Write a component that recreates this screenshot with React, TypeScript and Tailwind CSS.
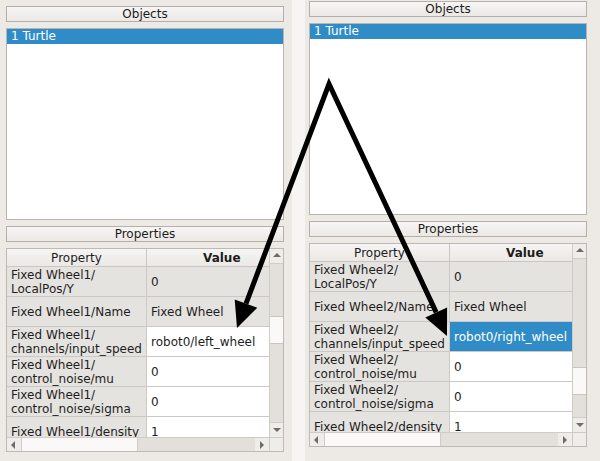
type Row = { prop: string; value: string; readOnly?: boolean; selected?: boolean };

function makeRows(n: number, side: string, selected: boolean): Row[] {
  const p = `Fixed Wheel${n}/`;
  return [
    { prop: `${p}\nLocalPos/Y`, value: "0", readOnly: true },
    { prop: `${p}Name`, value: "Fixed Wheel", readOnly: true },
    { prop: `${p}\nchannels/input_speed`, value: `robot0/${side}_wheel`, selected },
    { prop: `${p}\ncontrol_noise/mu`, value: "0" },
    { prop: `${p}\ncontrol_noise/sigma`, value: "0" },
    { prop: `${p}density`, value: "1" },
  ];
}

function Tri({ dir }: { dir: "up" | "down" | "left" | "right" }) {
  const pts = {
    up: "1,6 5,2 9,6",
    down: "1,3 5,7 9,3",
    left: "6,1 2,5 6,9",
    right: "3,1 7,5 3,9",
  }[dir];
  return (
    <svg width="10" height="10" viewBox="0 0 10 10">
      <polygon points={pts} fill="#6e6b68" />
    </svg>
  );
}

function SectionHeader({ label }: { label: string }) {
  return (
    <div className="flex h-[16px] items-center justify-center border border-[#b3afab] bg-gradient-to-b from-[#f7f6f4] to-[#ebe8e5] text-[12px] leading-none text-[#1c1c1c]">
      {label}
    </div>
  );
}

function PropertyTable({
  rows,
  handleTop,
  hHandle,
}: {
  rows: Row[];
  handleTop: number;
  hHandle: number;
}) {
  return (
    <div className="flex h-[204px] w-[278px] flex-col border border-[#bdb9b5] bg-[#e6e3e0]">
      <div className="flex h-[188px]">
        <div className="h-[188px] w-[262px] overflow-hidden">
          <div className="flex h-[18px] border-b border-[#c9c6c3] bg-gradient-to-b from-[#f6f5f3] to-[#ebe8e5] text-[12px] text-[#1c1c1c]">
            <div className="flex w-[140px] items-center justify-center border-r border-[#c9c6c3]">Property</div>
            <div className="flex w-[122px] items-center pl-[56px] font-bold">Value</div>
          </div>
          {rows.map((r) => (
            <div key={r.prop} className="flex h-[30px] border-b border-[#cbc8c5] text-[12px] leading-[14px]">
              <div className="flex w-[140px] items-center whitespace-pre border-r border-[#cbc8c5] bg-[#e5e3e0] pl-1 text-[#1e1e1e]">
                {r.prop}
              </div>
              <div
                className={
                  r.selected
                    ? "flex w-[122px] items-center whitespace-pre bg-[#308cc6] pl-1 text-white"
                    : r.readOnly
                      ? "flex w-[122px] items-center whitespace-pre bg-[#e5e3e0] pl-1 text-[#1e1e1e]"
                      : "flex w-[122px] items-center whitespace-pre bg-white pl-1 text-[#1e1e1e]"
                }
              >
                {r.value}
              </div>
            </div>
          ))}
        </div>
        <div className="flex w-[14px] flex-col border-l border-[#cfcbc7] bg-[#e3e0dc]">
          <div className="flex h-[14px] items-center justify-center bg-[#efedea]">
            <Tri dir="up" />
          </div>
          <div className="flex flex-1 flex-col border-y border-[#d0ccc8]">
            <div style={{ height: handleTop }} />
            <div className="h-[28px] border-y border-[#c9c5c1] bg-[#faf9f8]" />
          </div>
          <div className="flex h-[14px] items-center justify-center bg-[#efedea]">
            <Tri dir="down" />
          </div>
        </div>
      </div>
      <div className="flex h-[14px] border-t border-[#cfcbc7]">
        <div className="flex w-[262px] bg-[#e3e0dc]">
          <div className="flex w-[14px] items-center justify-center bg-[#efedea]">
            <Tri dir="left" />
          </div>
          <div className="border-x border-[#d0ccc8] bg-[#faf9f8]" style={{ width: hHandle }} />
          <div className="flex-1" />
          <div className="flex w-[14px] items-center justify-center bg-[#efedea]">
            <Tri dir="right" />
          </div>
        </div>
        <div className="w-[14px] border-l border-[#cfcbc7] bg-[#efedea]" />
      </div>
    </div>
  );
}

function Panel({ n, side, selected, handleTop, hHandle }: { n: number; side: string; selected: boolean; handleTop: number; hHandle: number }) {
  return (
    <div className="flex w-[278px] flex-col">
      <SectionHeader label="Objects" />
      <div className="mt-[6px] h-[192px] border border-[#b8b4b0] bg-white">
        <div className="h-[15px] bg-[#308cc6] pl-1 text-[12px] leading-[15px] text-white">1 Turtle</div>
      </div>
      <div className="mt-[6px]">
        <SectionHeader label="Properties" />
      </div>
      <div className="mt-[6px]">
        <PropertyTable rows={makeRows(n, side, selected)} handleTop={handleTop} hHandle={hHandle} />
      </div>
    </div>
  );
}

export default function App() {
  return (
    <div className="relative flex h-[461px] w-[600px] overflow-hidden font-['DejaVu_Sans',sans-serif]">
      <div className="w-[292px] bg-[#edeae6] pl-[6px] pt-[6px]">
        <Panel n={1} side="left" selected={false} handleTop={52} hHandle={117} />
      </div>
      <div className="w-[13px] bg-[#f6f5f4]" />
      <div className="flex-1 bg-[#edeae6] pl-[4px] pt-[1px]">
        <Panel n={2} side="right" selected={true} handleTop={108} hHandle={117} />
      </div>
      <svg className="pointer-events-none absolute inset-0" width="600" height="461" viewBox="0 0 600 461">
        <polyline
          points="246,303.6 329,84 436.2,312.4"
          fill="none"
          stroke="#000"
          strokeWidth="5"
          strokeLinejoin="miter"
          strokeMiterlimit="10"
        />
        <polygon points="237,328 257.3,307.7 234.7,299.5" fill="#000" />
        <polygon points="447,336 447.1,307.4 425.3,317.4" fill="#000" />
      </svg>
    </div>
  );
}
